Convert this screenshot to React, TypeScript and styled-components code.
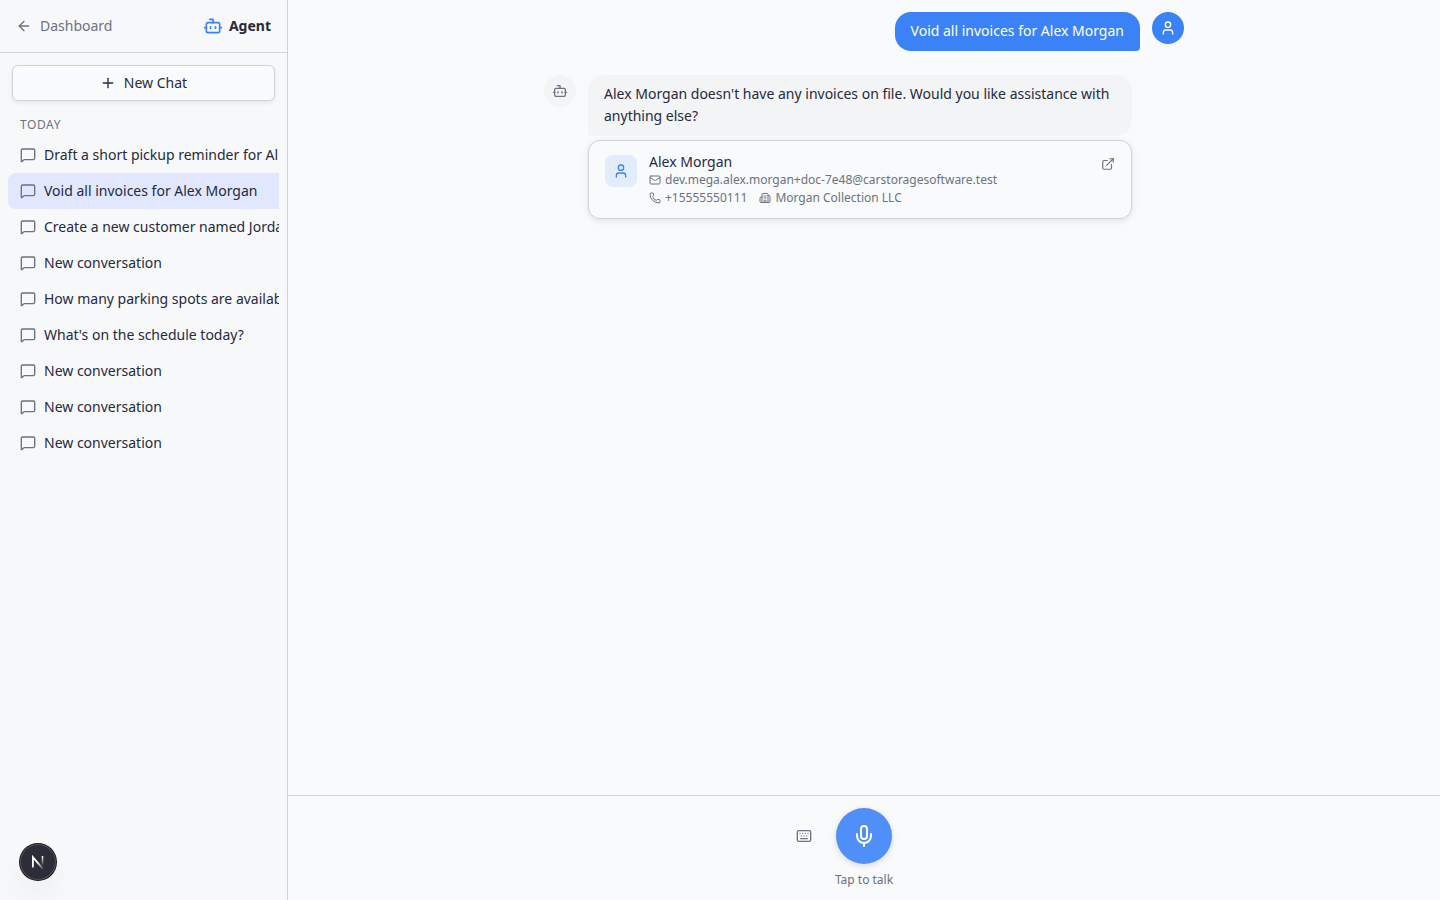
import React from 'react';
import styled, { createGlobalStyle, css } from 'styled-components';
import {
  ArrowLeft,
  Bot,
  Building2,
  ExternalLink,
  Keyboard,
  Mail,
  MessageSquare,
  Mic,
  Phone,
  Plus,
  User,
} from 'lucide-react';

const color = {
  page: '#f9fafc',
  sidebar: '#f7f8fa',
  border: '#d0d2da',
  text: '#262a3c',
  muted: '#6b7280',
  blue: '#3b82f6',
  blueSoft: '#e1edfd',
  selected: '#e0e7ff',
  bubble: '#f3f4f6',
};

const GlobalStyle = createGlobalStyle`
  *, *::before, *::after { box-sizing: border-box; }
  body {
    margin: 0;
    background: ${color.page};
    color: ${color.text};
    font-family: "Noto Sans", sans-serif;
    font-size: 14px;
    line-height: 20px;
  }
  button { font: inherit; color: inherit; cursor: pointer; }
  a { color: inherit; text-decoration: none; }
  svg { flex-shrink: 0; }
`;

const Shell = styled.div`
  display: flex;
  height: 100vh;
`;

const Sidebar = styled.aside`
  display: flex;
  flex-direction: column;
  flex: 0 0 288px;
  min-width: 0;
  background: ${color.sidebar};
  border-right: 1px solid ${color.border};
`;

const SidebarHeader = styled.header`
  display: flex;
  align-items: center;
  justify-content: space-between;
  padding: 16px;
  border-bottom: 1px solid ${color.border};
`;

const BackLink = styled.a`
  display: flex;
  align-items: center;
  gap: 8px;
  color: ${color.muted};
`;

const Brand = styled.div`
  display: flex;
  align-items: center;
  gap: 6px;
  font-weight: 700;

  svg { color: ${color.blue}; }
`;

const NewChatArea = styled.div`
  padding: 12px;
`;

const NewChatButton = styled.button`
  display: flex;
  align-items: center;
  justify-content: center;
  gap: 8px;
  width: 100%;
  height: 36px;
  padding: 0 16px;
  background: ${color.page};
  border: 1px solid ${color.border};
  border-radius: 6px;
  box-shadow: 0 2px 4px rgba(20, 24, 40, 0.08);
`;

const History = styled.nav`
  flex: 1;
  min-height: 0;
  margin: 0 8px;
  overflow: hidden;
`;

const GroupLabel = styled.h2`
  margin: 0;
  padding: 4px 12px;
  font-size: 12px;
  line-height: 16px;
  font-weight: 400;
  text-transform: uppercase;
  letter-spacing: 0.05em;
  color: ${color.muted};
`;

const ChatList = styled.ul`
  width: max-content;
  min-width: 100%;
  margin: 0;
  padding: 0;
  list-style: none;
`;

const ChatButton = styled.button<{ $selected: boolean }>`
  display: flex;
  align-items: center;
  gap: 8px;
  width: 100%;
  padding: 8px 12px;
  border: 0;
  border-radius: 8px;
  text-align: left;
  white-space: nowrap;
  background: ${({ $selected }) => ($selected ? color.selected : 'transparent')};

  svg { color: ${color.muted}; }
`;

const Main = styled.main`
  display: flex;
  flex-direction: column;
  flex: 1;
  min-width: 0;
`;

const Thread = styled.div`
  flex: 1;
  min-height: 0;
  overflow: auto;
`;

const ThreadInner = styled.div`
  display: flex;
  flex-direction: column;
  gap: 24px;
  max-width: 672px;
  margin: 0 auto;
  padding: 12px 16px;
`;

const Message = styled.article<{ $own?: boolean }>`
  display: flex;
  flex-direction: ${({ $own }) => ($own ? 'row-reverse' : 'row')};
  align-items: flex-start;
  gap: 12px;
`;

const Avatar = styled.div<{ $own?: boolean }>`
  display: grid;
  place-items: center;
  flex: 0 0 32px;
  height: 32px;
  border-radius: 50%;
  background: ${({ $own }) => ($own ? color.blue : color.bubble)};
  color: ${({ $own }) => ($own ? '#fff' : color.muted)};
`;

const MessageBody = styled.div`
  display: flex;
  flex-direction: column;
  gap: 4px;
  max-width: 85%;
`;

const Bubble = styled.p<{ $own?: boolean }>`
  margin: 0;
  padding: 8px 16px 9px;
  line-height: 22px;
  border-radius: 16px;
  ${({ $own }) =>
    $own
      ? css`
          color: #fff;
          background: ${color.blue};
          border-bottom-right-radius: 4px;
        `
      : css`
          background: ${color.bubble};
          border-bottom-left-radius: 4px;
        `}
`;

const ContactCard = styled.a`
  display: flex;
  align-items: flex-start;
  gap: 12px;
  padding: 12px 16px 11px;
  background: ${color.page};
  border: 1px solid ${color.border};
  border-radius: 12px;
  box-shadow: 0 2px 6px rgba(20, 24, 40, 0.1);
`;

const ContactIcon = styled.span`
  display: grid;
  place-items: center;
  flex: 0 0 32px;
  height: 32px;
  margin-top: 2px;
  border-radius: 8px;
  color: ${color.blue};
  background: ${color.blueSoft};
`;

const ContactInfo = styled.div`
  flex: 1;
  min-width: 0;
`;

const ContactName = styled.div`
  line-height: 18px;
`;

const ContactRow = styled.div`
  display: flex;
  gap: 12px;
  font-size: 12px;
  line-height: 18px;
  color: ${color.muted};
`;

const ContactDetail = styled.span`
  display: flex;
  align-items: center;
  gap: 4px;
`;

const OpenMark = styled.span`
  display: flex;
  padding-top: 4px;
  color: ${color.muted};
`;

const Composer = styled.footer`
  display: flex;
  flex-direction: column;
  gap: 8px;
  padding: 12px 16px;
  border-top: 1px solid ${color.border};
`;

const VoiceControls = styled.div`
  display: grid;
  grid-template-columns: 1fr auto 1fr;
  align-items: center;
  gap: 16px;
`;

const KeyboardButton = styled.button`
  display: grid;
  place-items: center;
  justify-self: end;
  width: 32px;
  height: 32px;
  padding: 0;
  border: 0;
  border-radius: 6px;
  background: transparent;
  color: ${color.muted};
`;

const MicButton = styled.button`
  display: grid;
  place-items: center;
  width: 56px;
  height: 56px;
  padding: 0;
  border: 0;
  border-radius: 50%;
  color: #fff;
  background: #4f8ff7;
  box-shadow: 0 2px 6px rgba(20, 24, 40, 0.14);
`;

const Hint = styled.p`
  margin: 0;
  font-size: 12px;
  line-height: 16px;
  text-align: center;
  color: ${color.muted};
`;

const DevToolsButton = styled.button`
  position: fixed;
  left: 20px;
  bottom: 20px;
  display: grid;
  place-items: center;
  width: 36px;
  height: 36px;
  padding: 0;
  border: 0;
  border-radius: 50%;
  background: #2b2d38;
  box-shadow: 0 0 0 1px #17171c, inset 0 0 0 1px #5b4a5c,
    0 16px 32px -8px rgba(20, 24, 40, 0.14);
`;

const chats = [
  'Draft a short pickup reminder for Al',
  'Void all invoices for Alex Morgan',
  'Create a new customer named Jordan',
  'New conversation',
  'How many parking spots are available',
  "What's on the schedule today?",
  'New conversation',
  'New conversation',
  'New conversation',
];

const selectedChat = 1;

function NextMark() {
  return (
    <svg width="16" height="16" viewBox="0 0 16 16" fill="none" aria-hidden="true">
      <defs>
        <linearGradient id="stem" x1="0" y1="2" x2="0" y2="12" gradientUnits="userSpaceOnUse">
          <stop stopColor="#fff" />
          <stop offset="1" stopColor="#fff" stopOpacity="0" />
        </linearGradient>
        <linearGradient id="slash" x1="8" y1="8" x2="13" y2="15" gradientUnits="userSpaceOnUse">
          <stop stopColor="#fff" />
          <stop offset="1" stopColor="#fff" stopOpacity="0.1" />
        </linearGradient>
      </defs>
      <path d="M2.9 13.6V3.2L12.9 14.8" stroke="url(#slash)" strokeWidth="1.8" />
      <path d="M12.5 2v9.6" stroke="url(#stem)" strokeWidth="1.6" />
    </svg>
  );
}

export default function App() {
  return (
    <>
      <GlobalStyle />
      <Shell>
        <Sidebar>
          <SidebarHeader>
            <BackLink href="#dashboard">
              <ArrowLeft size={16} />
              Dashboard
            </BackLink>
            <Brand>
              <Bot size={20} />
              Agent
            </Brand>
          </SidebarHeader>
          <NewChatArea>
            <NewChatButton type="button">
              <Plus size={16} />
              New Chat
            </NewChatButton>
          </NewChatArea>
          <History aria-label="Conversations">
            <GroupLabel>Today</GroupLabel>
            <ChatList>
              {chats.map((title, i) => (
                <li key={i}>
                  <ChatButton type="button" $selected={i === selectedChat}>
                    <MessageSquare size={16} />
                    {title}
                  </ChatButton>
                </li>
              ))}
            </ChatList>
          </History>
        </Sidebar>

        <Main>
          <Thread>
            <ThreadInner>
              <Message $own>
                <Avatar $own>
                  <User size={16} />
                </Avatar>
                <MessageBody>
                  <Bubble $own>Void all invoices for Alex Morgan</Bubble>
                </MessageBody>
              </Message>
              <Message>
                <Avatar>
                  <Bot size={16} />
                </Avatar>
                <MessageBody>
                  <Bubble>
                    Alex Morgan doesn't have any invoices on file. Would you like assistance with
                    anything else?
                  </Bubble>
                  <ContactCard href="#alex-morgan">
                    <ContactIcon>
                      <User size={16} />
                    </ContactIcon>
                    <ContactInfo>
                      <ContactName>Alex Morgan</ContactName>
                      <ContactRow>
                        <ContactDetail>
                          <Mail size={12} />
                          dev.mega.alex.morgan+doc-7e48@carstoragesoftware.test
                        </ContactDetail>
                      </ContactRow>
                      <ContactRow>
                        <ContactDetail>
                          <Phone size={12} />
                          +15555550111
                        </ContactDetail>
                        <ContactDetail>
                          <Building2 size={12} />
                          Morgan Collection LLC
                        </ContactDetail>
                      </ContactRow>
                    </ContactInfo>
                    <OpenMark>
                      <ExternalLink size={14} />
                    </OpenMark>
                  </ContactCard>
                </MessageBody>
              </Message>
            </ThreadInner>
          </Thread>

          <Composer>
            <VoiceControls>
              <KeyboardButton type="button" aria-label="Use keyboard">
                <Keyboard size={16} />
              </KeyboardButton>
              <MicButton type="button" aria-label="Start talking">
                <Mic size={24} />
              </MicButton>
            </VoiceControls>
            <Hint>Tap to talk</Hint>
          </Composer>
        </Main>
      </Shell>
      <DevToolsButton type="button" aria-label="Open developer tools">
        <NextMark />
      </DevToolsButton>
    </>
  );
}
